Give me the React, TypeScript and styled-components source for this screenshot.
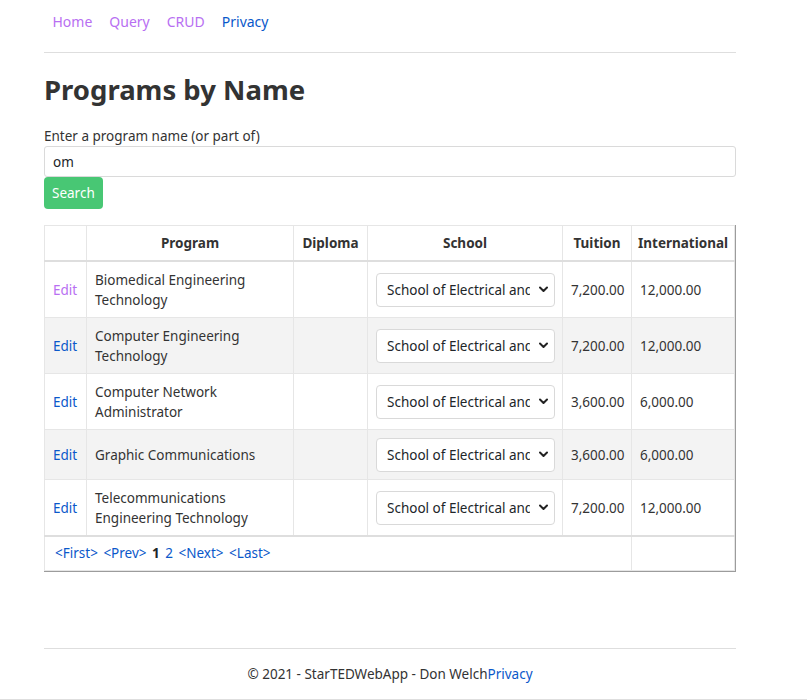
import React from "react";
import styled, { createGlobalStyle } from "styled-components";

const GlobalStyle = createGlobalStyle`
  html, body { margin: 0; padding: 0; background: #fff; }
  body {
    font-family: "Noto Sans", "Open Sans", sans-serif;
    font-size: 13.5px;
    line-height: 20px;
    color: #212529;
  }
  * { box-sizing: border-box; }
`;

const Page = styled.div`
  min-height: 700px;
  display: flex;
  flex-direction: column;
`;

const Container = styled.div`
  width: 692px;
  margin: 0 0 0 44px;
`;

const Header = styled(Container)`
  height: 53px;
  padding-top: 12px;
  border-bottom: 1px solid #dedede;
  display: flex;
  align-items: flex-start;
`;

const NavLink = styled.a<{ $visited?: boolean }>`
  padding: 0 8.5px;
  color: ${(p) => (p.$visited ? "#b86ff2" : "#0a58ca")};
  text-decoration: none;
  line-height: 20px;
  font-size: 14px;
`;

const Main = styled(Container)`
  flex: 1;
  padding-top: 18px;
`;

const Title = styled.h1`
  margin: 0 0 17px 0;
  font-size: 27.5px;
  line-height: 38px;
  font-weight: 700;
  color: #333;
`;

const Label = styled.label`
  display: block;
  line-height: 20px;
  color: #333;
`;

const Input = styled.input`
  display: block;
  width: 100%;
  height: 31px;
  border: 1px solid #dadada;
  border-radius: 3px;
  padding: 0 8px;
  font-family: inherit;
  font-size: 13.5px;
  color: #212529;
  outline: none;
`;

const Button = styled.button`
  display: block;
  height: 32px;
  padding: 0 8px;
  border: none;
  border-radius: 4px;
  background: #48c774;
  color: #fff;
  font-family: inherit;
  font-size: 13.5px;
  margin-bottom: 16px;
`;

const TableWrap = styled.div`
  border-right: 1px solid #9c9c9c;
  border-bottom: 1px solid #9c9c9c;
`;

const Table = styled.table`
  width: 100%;
  table-layout: fixed;
  border-collapse: collapse;
`;

const Th = styled.th`
  border: 1px solid #e6e6e6;
  border-bottom: 2px solid #dedede;
  padding: 7px 6px;
  font-weight: 700;
  text-align: center;
  color: #333;
  white-space: nowrap;
`;

const Row = styled.tr<{ $striped?: boolean }>`
  background: ${(p) => (p.$striped ? "#f3f3f3" : "#fff")};
`;

const Td = styled.td`
  border: 1px solid #e6e6e6;
  padding: 7.75px 7px 7.25px 8px;
  vertical-align: middle;
  color: #333;
`;

const FootTd = styled.td`
  border: 1px solid #e6e6e6;
  border-top: 2px solid #dedede;
  padding: 6px 10px 7px;
  vertical-align: middle;
  word-spacing: 2px;
`;

const Link = styled.a<{ $visited?: boolean }>`
  color: ${(p) => (p.$visited ? "#b86ff2" : "#0a58ca")};
  text-decoration: none;
`;

const Current = styled.b`
  color: #212529;
`;

const SelectWrap = styled.div`
  position: relative;
  width: 100%;
`;

const Select = styled.select`
  appearance: none;
  -webkit-appearance: none;
  width: 100%;
  height: 34px;
  border: 1px solid #d9d9d9;
  border-radius: 4px;
  background: #fff;
  padding: 0 24px 0 10px;
  font-family: inherit;
  font-size: 13.5px;
  color: #212529;
`;

const Chevron = styled.svg`
  position: absolute;
  right: 7px;
  top: 13px;
  width: 9px;
  height: 7px;
  pointer-events: none;
`;

const Footer = styled(Container)`
  height: 51px;
  border-top: 1px solid #dedede;
  display: flex;
  align-items: center;
  justify-content: center;
  color: #333;
`;

const BottomRule = styled.div`
  border-bottom: 1px solid #dedede;
`;

type Prog = { name: string; tuition: string; intl: string; visited?: boolean };

const programs: Prog[] = [
  { name: "Biomedical Engineering Technology", tuition: "7,200.00", intl: "12,000.00", visited: true },
  { name: "Computer Engineering Technology", tuition: "7,200.00", intl: "12,000.00" },
  { name: "Computer Network Administrator", tuition: "3,600.00", intl: "6,000.00" },
  { name: "Graphic Communications", tuition: "3,600.00", intl: "6,000.00" },
  { name: "Telecommunications Engineering Technology", tuition: "7,200.00", intl: "12,000.00" },
];

const SchoolSelect = () => (
  <SelectWrap>
    <Select defaultValue="se">
      <option value="se">School of Electrical and Computer Engineering</option>
    </Select>
    <Chevron viewBox="0 0 9 7">
      <path d="M1 1.5 L4.5 5 L8 1.5" fill="none" stroke="#222" strokeWidth="2" strokeLinecap="round" strokeLinejoin="round" />
    </Chevron>
  </SelectWrap>
);

export default function App() {
  return (
    <Page>
      <GlobalStyle />
      <Header>
        <NavLink $visited href="#">Home</NavLink>
        <NavLink $visited href="#">Query</NavLink>
        <NavLink $visited href="#">CRUD</NavLink>
        <NavLink href="#">Privacy</NavLink>
      </Header>
      <Main>
        <Title>Programs by Name</Title>
        <Label htmlFor="q">Enter a program name (or part of)</Label>
        <Input id="q" defaultValue="om" />
        <Button>Search</Button>
        <TableWrap>
          <Table>
            <colgroup>
              <col style={{ width: 42 }} />
              <col style={{ width: 207 }} />
              <col style={{ width: 74 }} />
              <col style={{ width: 195 }} />
              <col style={{ width: 69 }} />
              <col />
            </colgroup>
            <thead>
              <tr>
                <Th></Th>
                <Th>Program</Th>
                <Th>Diploma</Th>
                <Th>School</Th>
                <Th>Tuition</Th>
                <Th>International</Th>
              </tr>
            </thead>
            <tbody>
              {programs.map((p, i) => (
                <Row key={p.name} $striped={i % 2 === 1}>
                  <Td>
                    <Link $visited={p.visited} href="#">Edit</Link>
                  </Td>
                  <Td>{p.name}</Td>
                  <Td></Td>
                  <Td>
                    <SchoolSelect />
                  </Td>
                  <Td>{p.tuition}</Td>
                  <Td>{p.intl}</Td>
                </Row>
              ))}
            </tbody>
            <tfoot>
              <tr>
                <FootTd colSpan={5}>
                  <Link href="#">&lt;First&gt;</Link> <Link href="#">&lt;Prev&gt;</Link>{" "}
                  <Current>1</Current> <Link href="#">2</Link>{" "}
                  <Link href="#">&lt;Next&gt;</Link> <Link href="#">&lt;Last&gt;</Link>
                </FootTd>
                <FootTd></FootTd>
              </tr>
            </tfoot>
          </Table>
        </TableWrap>
      </Main>
      <Footer>
        <span>
          © 2021 - StarTEDWebApp - Don Welch<Link href="#">Privacy</Link>
        </span>
      </Footer>
      <BottomRule />
    </Page>
  );
}
